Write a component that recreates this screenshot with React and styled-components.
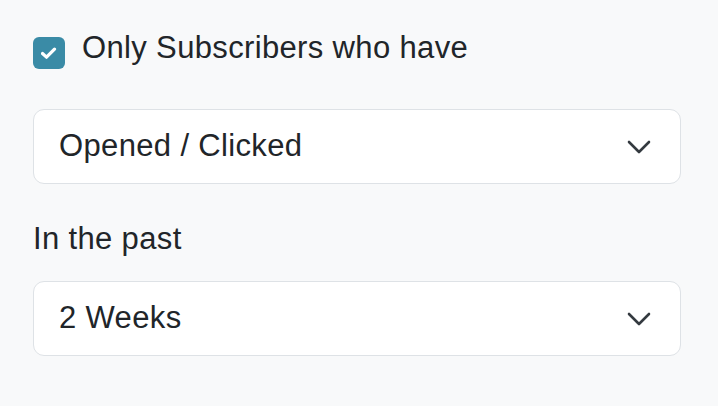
import styled, { createGlobalStyle } from 'styled-components';

const Global = createGlobalStyle`
    body {
        margin: 0;
        background: #f8f9fa;
        font-family: 'Liberation Sans', Arial, sans-serif;
        color: #212529;
    }
`

function Chevron() {
    return (
        <svg width="24" height="14" viewBox="0 0 24 14" fill="none">
            <polyline points="2,2 12,12 22,2" stroke="#343a40" strokeWidth="2.6" strokeLinecap="round" strokeLinejoin="round" />
        </svg>
    )
}

function Select({ value }) {
    return (
        <SelectBox>
            <span>{value}</span>
            <Chevron />
        </SelectBox>
    )
}

function App() {
    return (
        <Panel>
            <Global />
            <CheckRow>
                <CheckBox>
                    <svg width="16" height="12" viewBox="0 0 16 12" fill="none">
                        <polyline points="1.5,6.5 5.5,10.2 13.5,2.2" stroke="white" strokeWidth="3.2" strokeLinecap="round" strokeLinejoin="round" />
                    </svg>
                </CheckBox>
                <Label>Only Subscribers who have</Label>
            </CheckRow>

            <Select value="Opened / Clicked" />

            <FieldLabel>In the past</FieldLabel>

            <Select value="2 Weeks" />
        </Panel>
    )
}

export default App;

// & CSS COMPONENTS

const Panel = styled.div`
    box-sizing: border-box;
    width: 718px;
    height: 406px;
    padding: 27px 37px 0 33px;
    display: flex; flex-direction: column;
    font-size: 31px;
    letter-spacing: 0.35px;
`

const CheckRow = styled.div`
    display: flex; align-items: flex-start;
    gap: 17px;
    margin-bottom: 40px;
`

const CheckBox = styled.div`
    margin-top: 10px;
    width: 32px; height: 32px;
    flex-shrink: 0;
    border-radius: 6px;
    background-color: #3a8ba6;
    display: flex; justify-content: center; align-items: center;
`

const Label = styled.span`
    line-height: 42px;
`

const FieldLabel = styled.label`
    line-height: 42px;
    margin-top: 34px;
    margin-bottom: 21px;
`

const SelectBox = styled.div`
    box-sizing: border-box;
    height: 75px;
    border: 1.5px solid #dee2e6;
    border-radius: 11px;
    background: white;
    display: flex; justify-content: space-between; align-items: center;
    padding: 0 29px 0 25px;

    span {
        line-height: 42px;
        margin-bottom: 2px;
    }
`
